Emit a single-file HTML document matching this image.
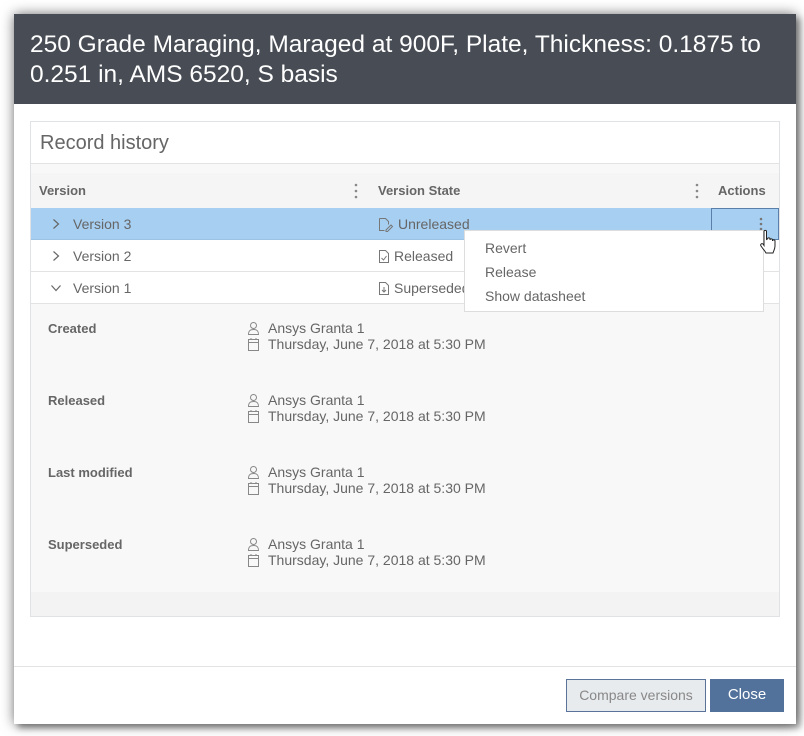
<!DOCTYPE html>
<html><head><style>
*{box-sizing:border-box;margin:0;padding:0}
body{width:804px;height:736px;background:#fff;font-family:"Liberation Sans",sans-serif;position:relative;overflow:hidden;color:#555}
.modal{position:absolute;left:14px;top:14px;width:782px;height:710px;background:#fff;box-shadow:0 0 12px rgba(0,0,0,.55),4px 4px 6px rgba(0,0,0,.35)}
.hdr{position:absolute;left:0;top:0;width:782px;height:90px;background:#474c55;color:#fff;font-size:24.5px;line-height:30px;padding:16px 0 0 16px;white-space:nowrap}
.panel{position:absolute;left:16px;top:107px;width:750px;height:496px;border:1px solid #e0e2e6;background:#f8f8f8}
.ptitle{height:42px;background:#fff;border-bottom:1px solid #e3e3e3;font-size:20px;color:#666;padding:10px 0 0 9px}
.th{position:absolute;top:51px;left:0;width:748px;height:35px;background:#f5f5f5;font-size:13px;font-weight:bold;color:#666}
.th span{position:absolute;top:10px}
.row{position:absolute;left:0;width:748px;height:32px;background:#fff;border-bottom:1px solid #e3e3e3;font-size:14px;color:#666}
.row .v{position:absolute;left:42px;top:8px}
.row .s{position:absolute;left:347px;top:8px}
.chev{position:absolute;left:20px;top:10px}
.lab{position:absolute;left:17px;font-weight:bold;font-size:13px;color:#666;white-space:nowrap}
.info{position:absolute;left:237px;line-height:16px;font-size:14px;color:#666;white-space:nowrap}
.menu{position:absolute;left:464px;top:230px;width:300px;height:82px;background:#fff;border:1px solid #ddd;font-size:14px;color:#666}
.menu div{position:absolute;left:20px}
.btn{position:absolute;top:679px;height:33px;font-size:14px;text-align:center;line-height:31px}
</style></head><body>
<div class="modal">
<div class="hdr">250 Grade Maraging, Maraged at 900F, Plate, Thickness: 0.1875 to<br>0.251 in, AMS 6520, S basis</div>
<div class="panel">
<div class="ptitle">Record history</div>
<div class="th"><span style="left:8px">Version</span><span style="left:347px">Version State</span><span style="left:687px">Actions</span>
<svg style="position:absolute;left:323px;top:10px" width="4" height="16"><circle cx="2" cy="2" r="1.3" fill="#888"/><circle cx="2" cy="8" r="1.3" fill="#888"/><circle cx="2" cy="14" r="1.3" fill="#888"/></svg>
<svg style="position:absolute;left:664px;top:10px" width="4" height="16"><circle cx="2" cy="2" r="1.3" fill="#888"/><circle cx="2" cy="8" r="1.3" fill="#888"/><circle cx="2" cy="14" r="1.3" fill="#888"/></svg>
</div>
<div class="row" style="top:86px;background:#a6cff2;border-bottom-color:#9cc3e4">
<svg class="chev" width="10" height="12" fill="none" stroke="#666" stroke-width="1.2"><path d="M2.5 1.5l5 4.5-5 4.5"/></svg>
<span class="v">Version 3</span>
<svg style="position:absolute;left:347px;top:9px" width="16" height="15" fill="none" stroke="#777" stroke-width="1"><path d="M1.5 1.5h6l3 3v3M1.5 1.5v12h5"/><path d="M8 13l5-5 1.5 1.5-5 5H8z"/></svg>
<span class="s" style="left:367px">Unreleased</span>
<div style="position:absolute;left:680px;top:0;width:68px;height:32px;border:1px solid #5a7fa8"></div>
<svg style="position:absolute;left:728px;top:9px" width="4" height="14"><circle cx="2" cy="2" r="1.3" fill="#777"/><circle cx="2" cy="7" r="1.3" fill="#777"/><circle cx="2" cy="12" r="1.3" fill="#777"/></svg>
</div>
<div class="row" style="top:118px">
<svg class="chev" width="10" height="12" fill="none" stroke="#666" stroke-width="1.2"><path d="M2.5 1.5l5 4.5-5 4.5"/></svg>
<span class="v">Version 2</span>
<svg style="position:absolute;left:347px;top:9px" width="12" height="15" fill="none" stroke="#777" stroke-width="1"><path d="M1.5 1.5h6l3 3v9h-9z"/><path d="M3.5 9l2 2 3-4"/></svg>
<span class="s" style="left:363px">Released</span></div>
<div class="row" style="top:150px">
<svg class="chev" style="left:19px;top:11px" width="12" height="10" fill="none" stroke="#666" stroke-width="1.2"><path d="M1.5 2.5l4.5 5 4.5-5"/></svg>
<span class="v">Version 1</span>
<svg style="position:absolute;left:347px;top:9px" width="12" height="15" fill="none" stroke="#777" stroke-width="1"><path d="M1.5 1.5h6l3 3v9h-9z"/><path d="M6 6v5M4 9l2 2 2-2"/></svg>
<span class="s" style="left:363px">Superseded</span></div>
<div style="position:absolute;left:0;top:470px;width:748px;height:24px;background:#f3f3f3"></div>
<div class="lab" style="top:199px">Created</div>
<div class="lab" style="top:271px">Released</div>
<div class="lab" style="top:343px">Last modified</div>
<div class="lab" style="top:415px">Superseded</div>
<div class="info" style="top:198px">Ansys Granta 1<br>Thursday, June 7, 2018 at 5:30 PM</div>
<div class="info" style="top:270px">Ansys Granta 1<br>Thursday, June 7, 2018 at 5:30 PM</div>
<div class="info" style="top:342px">Ansys Granta 1<br>Thursday, June 7, 2018 at 5:30 PM</div>
<div class="info" style="top:414px">Ansys Granta 1<br>Thursday, June 7, 2018 at 5:30 PM</div>
</div>
<div style="position:absolute;left:0;top:652px;width:782px;border-top:1px solid #e3e3e3"></div>
</div>
<svg style="position:absolute;left:0;top:0" width="804" height="736" fill="none" stroke="#888" stroke-width="1">
<g id="ic"><circle cx="253.5" cy="325.5" r="3"/><path d="M248.5 334.5c0-4 2-5 5-5s5 1 5 5z"/><rect x="248.5" y="339.5" width="10" height="11"/><path d="M248.5 342.5h10M251 338v2M256 338v2"/></g>
<use href="#ic" y="72"/><use href="#ic" y="144"/><use href="#ic" y="216"/>
</svg>
<div class="menu"><div style="top:9px">Revert</div><div style="top:33px">Release</div><div style="top:57px">Show datasheet</div></div>
<svg style="position:absolute;left:759px;top:229px" width="20" height="26"><path d="M5 2.5c0-1.5 2.5-1.5 2.5 0v8l1-.5c0-1.5 2.5-1.5 2.5 0v1c0-1.5 2.5-1.5 2.5 0v1c0-1.5 2.5-1.5 2.5 0V17c0 3-1.5 5-2 7H7c-1-2-3-4-5-7-1-1.5.5-3 2-2l1 1.5z" fill="#fff" stroke="#222" stroke-width="1"/></svg>
<div class="btn" style="left:566px;width:140px;background:#e8ebee;border:1px solid #5a7398;color:#888">Compare versions</div>
<div class="btn" style="left:710px;width:74px;background:#52729c;color:#fff;font-size:15px">Close</div>
</body></html>
